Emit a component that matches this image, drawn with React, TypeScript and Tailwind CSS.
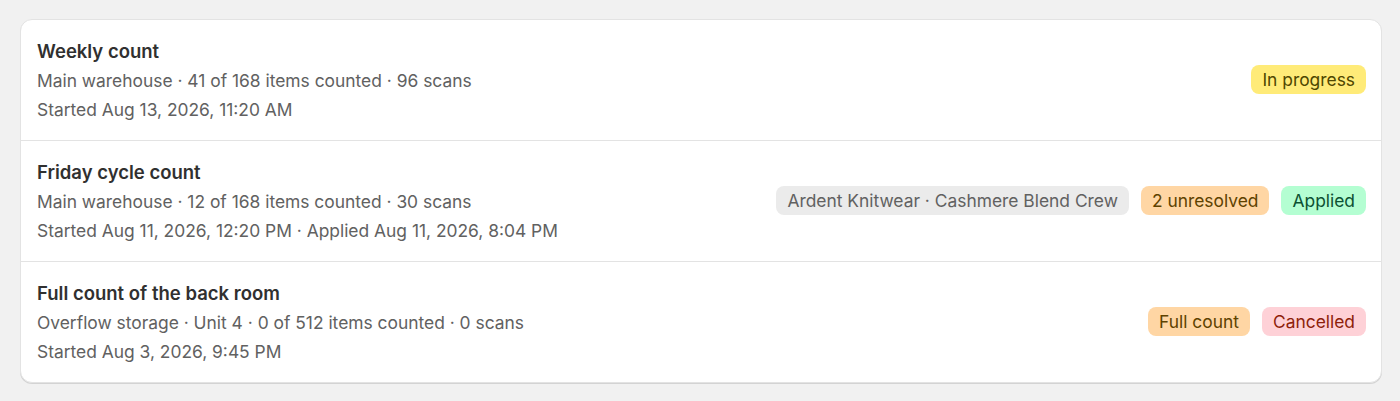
import React from "react";

type Badge = { text: string; cls: string };
type Row = { title: string; meta: string; date: string; badges: Badge[] };

const gray = "bg-[#ebebeb] text-[#616161]";
const yellow = "bg-[#ffeb78] text-[#4f4700]";
const orange = "bg-[#ffd6a4] text-[#5e4200]";
const green = "bg-[#b4fed2] text-[#0c5132]";
const red = "bg-[#fed1d7] text-[#8e1f0b]";

const rows: Row[] = [
  {
    title: "Weekly count",
    meta: "Main warehouse · 41 of 168 items counted · 96 scans",
    date: "Started Aug 13, 2026, 11:20 AM",
    badges: [{ text: "In progress", cls: yellow }],
  },
  {
    title: "Friday cycle count",
    meta: "Main warehouse · 12 of 168 items counted · 30 scans",
    date: "Started Aug 11, 2026, 12:20 PM · Applied Aug 11, 2026, 8:04 PM",
    badges: [
      { text: "Ardent Knitwear · Cashmere Blend Crew", cls: gray },
      { text: "2 unresolved", cls: orange },
      { text: "Applied", cls: green },
    ],
  },
  {
    title: "Full count of the back room",
    meta: "Overflow storage · Unit 4 · 0 of 512 items counted · 0 scans",
    date: "Started Aug 3, 2026, 9:45 PM",
    badges: [
      { text: "Full count", cls: orange },
      { text: "Cancelled", cls: red },
    ],
  },
];

export default function App() {
  return (
    <div
      className="min-h-[401px] bg-[#f1f1f1] pl-5 pr-[18px] pt-[19px]"
      style={{ fontFamily: "Inter, 'Noto Sans', sans-serif" }}
    >
      <div className="overflow-hidden rounded-xl border border-[#e3e3e3] bg-white shadow-[0_1px_0_0_rgba(0,0,0,0.12)]">
        {rows.map((r, i) => (
          <div
            key={i}
            className={`flex items-center justify-between pl-4 pr-[15px] pt-[17px] pb-4 ${
              i > 0 ? "border-t border-[#e3e3e3]" : ""
            }`}
          >
            <div className="flex flex-col">
              <div className="text-[18.5px] font-semibold leading-[29px] text-[#303030]">
                {r.title}
              </div>
              <div className="text-[17.4px] leading-[29px] text-[#616161]">{r.meta}</div>
              <div className="text-[17.4px] leading-[29px] text-[#616161]">{r.date}</div>
            </div>
            <div className="-mt-[2px] flex items-center gap-3">
              {r.badges.map((b, j) => (
                <span
                  key={j}
                  className={`rounded-lg px-[11px] text-[17.4px] leading-[29px] ${b.cls}`}
                >
                  {b.text}
                </span>
              ))}
            </div>
          </div>
        ))}
      </div>
    </div>
  );
}
